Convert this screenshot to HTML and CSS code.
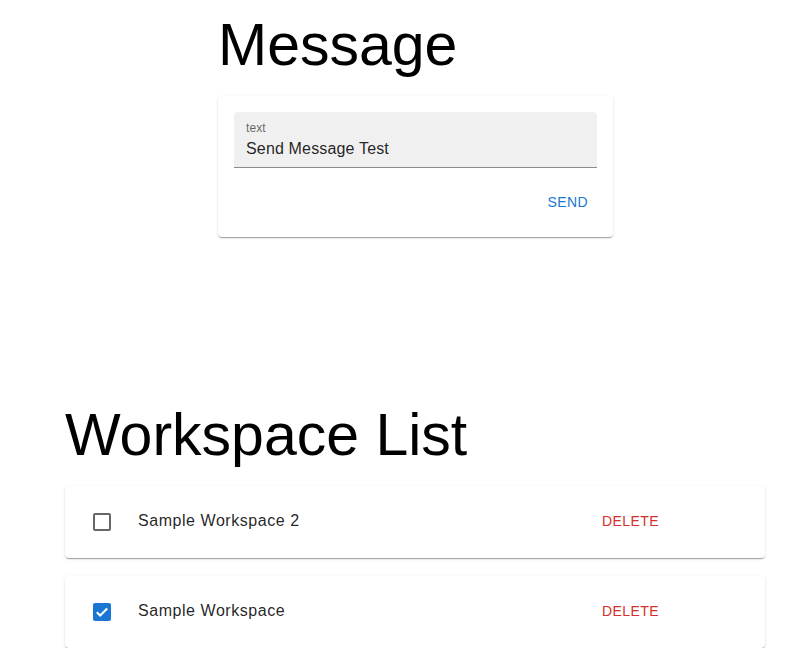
FILE: index.html
```html
<!DOCTYPE html>
<html>
<head>
<meta charset="utf-8">
<link rel="stylesheet" href="styles.css">
</head>
<body>
<section class="message">
  <h1 class="title">Message</h1>
  <div class="card msg-card">
    <div class="field">
      <span class="field-label">text</span>
      <span class="field-value">Send Message Test</span>
    </div>
    <div class="actions">
      <button class="btn btn-primary">Send</button>
    </div>
  </div>
</section>
<section class="workspaces">
  <h1 class="title">Workspace List</h1>
  <div class="list">
    <div class="card ws-row">
      <span class="cb-wrap"><span class="cb"></span></span>
      <span class="ws-name">Sample Workspace 2</span>
      <button class="btn btn-danger">Delete</button>
    </div>
    <div class="card ws-row">
      <span class="cb-wrap"><span class="cb cb-checked"><svg viewBox="0 0 18 18" width="18" height="18"><path d="M3.8 9.2 L7.2 12.6 L14.2 5.6" fill="none" stroke="#fff" stroke-width="2.1"/></svg></span></span>
      <span class="ws-name">Sample Workspace</span>
      <button class="btn btn-danger">Delete</button>
    </div>
  </div>
</section>
</body>
</html>
```
FILE: styles.css
```css
* { box-sizing: border-box; }
body {
  margin: 0;
  font-family: "Liberation Sans", Arial, sans-serif;
  color: rgba(0,0,0,0.87);
  background: #fff;
}
.title {
  margin: 0;
  font-size: 59px;
  font-weight: 400;
  line-height: 69px;
  color: #000;
}
.message {
  margin: 11px 0 0 218px;
  width: 395px;
}
.card {
  background: #fff;
  border-radius: 4px;
  box-shadow: 0 2px 1px -1px rgba(0,0,0,0.2), 0 1px 1px 0 rgba(0,0,0,0.14), 0 1px 3px 0 rgba(0,0,0,0.12);
}
.msg-card {
  margin-top: 16px;
  padding: 16px;
  height: 141px;
}
.field {
  display: flex;
  flex-direction: column;
  height: 56px;
  background: #f0f0f0;
  border-radius: 4px 4px 0 0;
  border-bottom: 1px solid rgba(0,0,0,0.42);
  padding: 9px 12px 0 12px;
}
.field-label {
  font-size: 12px;
  line-height: 14px;
  color: rgba(0,0,0,0.6);
  letter-spacing: 0.01em;
}
.field-value {
  font-size: 16px;
  line-height: 22px;
  margin-top: 3px;
  letter-spacing: 0.01em;
}
.actions {
  display: flex;
  justify-content: flex-end;
  margin-top: 16px;
  padding-right: 1px;
}
.btn {
  font-family: "Liberation Sans", Arial, sans-serif;
  background: none;
  border: 0;
  padding: 6px 8px;
  font-size: 14px;
  line-height: 24px;
  letter-spacing: 0.03em;
  text-transform: uppercase;
  cursor: pointer;
  border-radius: 4px;
}
.btn-primary { color: #1976d2; }
.btn-danger { color: #d32f2f; margin-top: -2px; }
.workspaces {
  margin: 164px 0 0 65px;
  width: 700px;
}
.list {
  display: flex;
  flex-direction: column;
  gap: 18px;
  margin-top: 16px;
}
.ws-row {
  display: flex;
  align-items: center;
  height: 72px;
  padding: 0 98px 0 16px;
}
.cb-wrap {
  width: 42px;
  height: 42px;
  display: flex;
  align-items: center;
  justify-content: center;
  margin-right: 15px;
}
.cb {
  width: 18px;
  height: 18px;
  border: 2px solid rgba(0,0,0,0.6);
  border-radius: 2px;
  display: block;
}
.cb-checked {
  border: 0;
  background: #1976d2;
}
.cb-checked svg { display: block; }
.ws-name {
  flex: 1;
  font-size: 16px;
  letter-spacing: 0.55px;
  margin-top: -2px;
}
```
